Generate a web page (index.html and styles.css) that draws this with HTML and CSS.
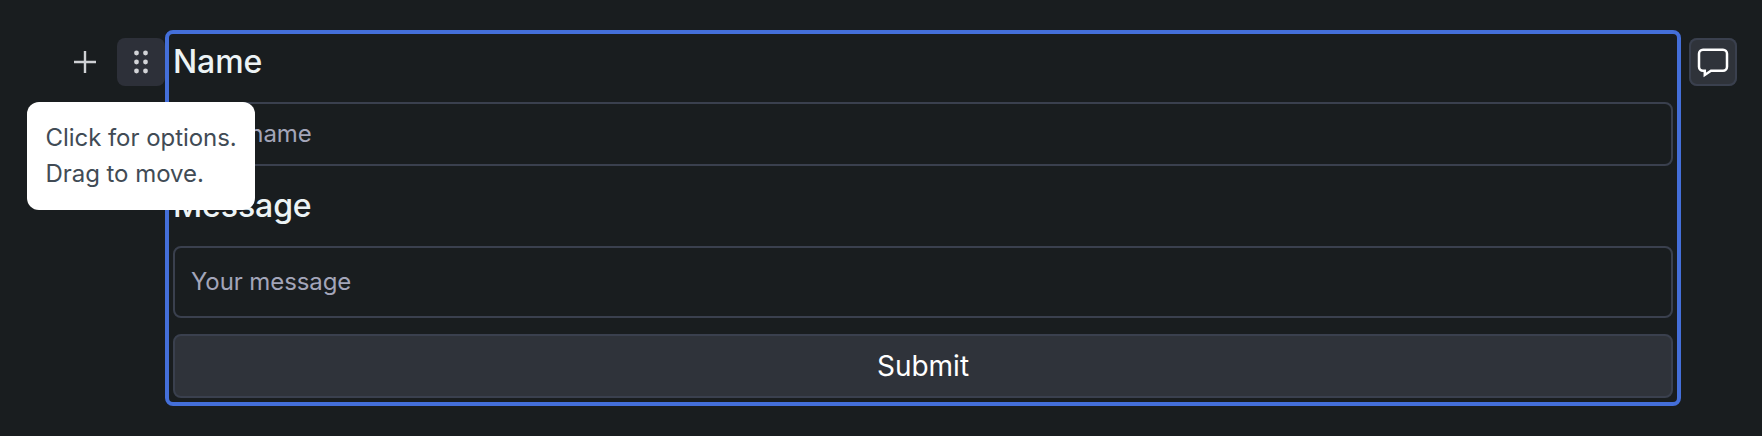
FILE: index.html
```html
<!DOCTYPE html>
<html lang="en">
<head>
<meta charset="utf-8">
<title>Form block</title>
<link rel="stylesheet" href="styles.css">
</head>
<body>
<main class="editor">
  <div class="side-menu">
    <button class="icon-button" aria-label="Add block">
      <svg width="48" height="48" viewBox="0 0 48 48"><path d="M24 13v22M13 24h22" fill="none" stroke="#cfd1d4" stroke-width="2.4"/></svg>
    </button>
    <button class="icon-button drag-handle" aria-label="Block options">
      <svg width="48" height="48" viewBox="0 0 48 48" fill="#d3d4d8"><circle cx="19.5" cy="15" r="2.4"/><circle cx="28.5" cy="15" r="2.4"/><circle cx="19.5" cy="24" r="2.4"/><circle cx="28.5" cy="24" r="2.4"/><circle cx="19.5" cy="33" r="2.4"/><circle cx="28.5" cy="33" r="2.4"/></svg>
    </button>
    <div class="tooltip">Click for options.<br>Drag to move.</div>
  </div>
  <form class="form-block">
    <label class="label" for="name">Name</label>
    <input class="field" id="name" placeholder="Your name">
    <label class="label" for="message">Message</label>
    <input class="field field-message" id="message" placeholder="Your message">
    <button class="submit" type="button">Submit</button>
  </form>
  <button class="icon-button comment" aria-label="Comment">
    <svg width="48" height="48" viewBox="0 0 48 48"><path d="M14 11.800h20a4 4 0 0 1 4 4v13a4 4 0 0 1-4 4H22L15.800 37V32.800H14a4 4 0 0 1-4-4v-13a4 4 0 0 1 4-4z" fill="none" stroke="#fff" stroke-width="2.500"/></svg>
  </button>
</main>
</body>
</html>
```
FILE: styles.css
```css
* { box-sizing: border-box; }
body {
  margin: 0;
  height: 436px;
  overflow: hidden;
  background: #191d1f;
  font-family: Inter, sans-serif;
}
.editor {
  display: flex;
  align-items: flex-start;
  padding: 30px 25px 0 61px;
}
.side-menu {
  position: relative;
  display: flex;
  gap: 8px;
  margin-top: 8px;
}
.icon-button {
  flex: none;
  width: 48px;
  height: 48px;
  padding: 0;
  border: 0;
  border-radius: 8px;
  background: none;
}
.icon-button svg { display: block; }
.drag-handle { background: #2d3039; }
.tooltip {
  position: absolute;
  z-index: 1;
  top: 64px;
  left: -34px;
  width: 228px;
  height: 108px;
  padding: 18px 18px 18px 18.5px;
  border-radius: 12px;
  background: #fff;
  color: #414b55;
  font-size: 24px;
  line-height: 36px;
  letter-spacing: -0.05px;
  white-space: nowrap;
}
.form-block {
  flex: 1;
  display: flex;
  flex-direction: column;
  height: 376px;
  padding: 4px;
  border: 4px solid #446fd9;
  border-radius: 8px;
}
.label {
  height: 48px;
  margin-bottom: 16px;
  color: #ecf3f5;
  font-size: 32px;
  font-weight: 500;
  line-height: 48px;
  letter-spacing: -0.1px;
}
.field {
  height: 64px;
  margin: 0 0 16px;
  padding: 0 16px 2px;
  border: 2px solid #3a404e;
  border-radius: 8px;
  outline: 0;
  background: #191d1f;
  font: 24px Inter, sans-serif;
  letter-spacing: -0.1px;
}
.field::placeholder { color: #a3a5b9; opacity: 1; }
.field-message { height: 72px; }
.submit {
  height: 64px;
  padding: 0;
  border: 2px solid #3a404e;
  border-radius: 8px;
  background: #2f333a;
  color: #fff;
  font: 28px Inter, sans-serif;
}
.comment {
  margin: 8px 0 0 8px;
  background: #2f333a;
  box-shadow: inset 0 0 0 2px #3a404e;
}
```
